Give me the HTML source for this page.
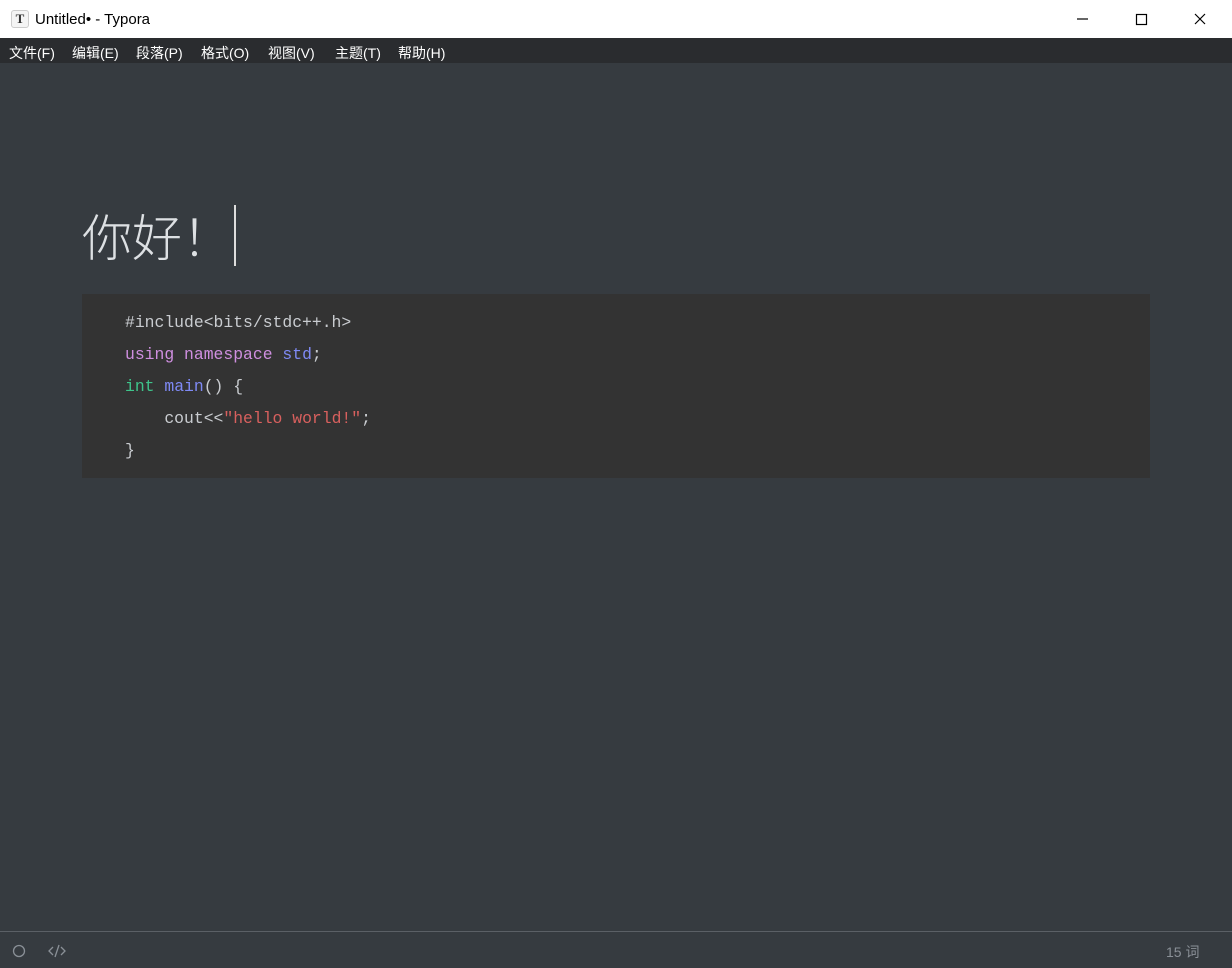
<!DOCTYPE html>
<html><head><meta charset="utf-8"><style>
*{margin:0;padding:0;box-sizing:border-box}
body{width:1232px;height:968px;background:#363b40;position:relative;overflow:hidden;font-family:"Liberation Sans","Noto Sans CJK SC",sans-serif}
.title{position:absolute;left:0;top:0;width:1232px;height:38px;background:#fff;color:#000;font-size:15px}
.title .ic{position:absolute;left:11px;top:10px;width:18px;height:18px;border:1px solid #ccc;border-radius:3px;background:#f4f4f4;font-family:"Liberation Serif",serif;font-size:13px;text-align:center;line-height:16px;color:#333;font-weight:bold}
.title .t{position:absolute;left:35px;top:11px}
.menu{position:absolute;left:0;top:38px;width:1232px;height:25px;background:#2a2c2f;color:#fff;font-size:14px}
.menu span{position:absolute;top:5px}
.h{position:absolute;left:82px;top:200px;font-size:50px;color:#dde0e3;font-family:"Noto Sans CJK SC",sans-serif;line-height:70px;font-weight:300}
.cur{position:absolute;left:234px;top:205px;width:2px;height:61px;background:#ddd}
.code{position:absolute;left:82px;top:294px;width:1068px;height:184px;background:#333333;font-family:"Liberation Mono",monospace;font-size:16.4px;color:#c9ccd0;padding:13px 0 0 43px;line-height:32px;white-space:pre}
.k{color:#cf8fe0}.b{color:#7f8af5}.g{color:#3ec48b}.s{color:#d8605e}
.sb{position:absolute;left:0;top:931px;width:1232px;height:1px;background:#5b6066}
.st{position:absolute;color:#8a9097;font-size:14px}
</style></head><body>
<div class="title"><div class="ic">T</div><div class="t">Untitled• - Typora</div>
<svg style="position:absolute;left:1070px;top:10px" width="150" height="18" fill="none" stroke="#000" stroke-width="1.2">
<path d="M7 9h11"/><rect x="66.5" y="4.5" width="10" height="10"/><path d="M125 4l10 10M135 4l-10 10"/></svg></div>
<div class="menu"><span style="left:9px">文件(F)</span><span style="left:72px">编辑(E)</span><span style="left:136px">段落(P)</span><span style="left:201px">格式(O)</span><span style="left:268px">视图(V)</span><span style="left:335px">主题(T)</span><span style="left:398px">帮助(H)</span></div>
<div class="h">你好！</div><div class="cur"></div>
<div class="code">#include&lt;bits/stdc++.h&gt;
<span class="k">using namespace</span> <span class="b">std</span>;
<span class="g">int</span> <span class="b">main</span>() {
    cout&lt;&lt;<span class="s">"hello world!"</span>;
}</div>
<div class="sb"></div>
<svg style="position:absolute;left:12px;top:943px" width="60" height="16" fill="none" stroke="#8a9097" stroke-width="1.3"><circle cx="7" cy="8" r="5.5"/><path d="M41 4l-4 4 4 4M49 4l4 4-4 4M47 2l-4 12"/></svg>
<div class="st" style="left:1166px;top:942px">15 词</div>
</body></html>
